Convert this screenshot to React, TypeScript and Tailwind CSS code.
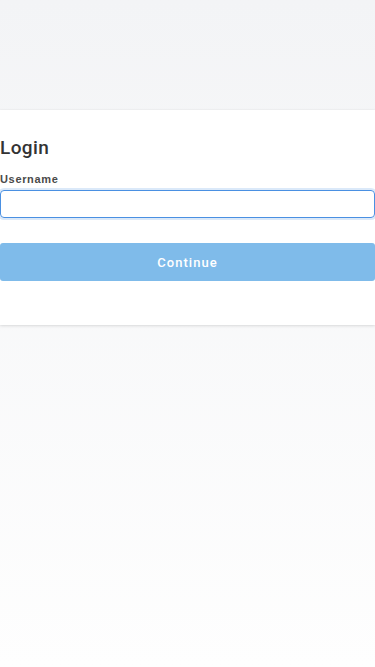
import { useState } from "react"

export default function App() {
  const [username, setUsername] = useState("")

  return (
    <div className="min-h-screen bg-gradient-to-b from-[#f3f4f6] to-[#fefefe] font-['Liberation_Sans',Arial,sans-serif]">
      <div className="h-[110px]" />
      <div className="bg-white pt-[26px] pb-[44px] shadow-[0_1px_3px_rgba(0,0,0,0.12),0_0_1px_rgba(0,0,0,0.08)]">
        <h1 className="font-['Roboto',Arial,sans-serif] text-[19px] leading-[24px] font-medium tracking-[0.02em] text-[#333]">Login</h1>
        <label htmlFor="username" className="mt-[12px] block text-[11px] leading-[14px] font-bold tracking-[0.06em] text-[#4a4a4a]">
          Username
        </label>
        <input
          id="username"
          autoFocus
          value={username}
          onChange={(e) => setUsername(e.target.value)}
          className="mt-[4px] block h-[28px] w-full rounded-[4px] border border-[#4a90e2] px-[14px] text-[13px] text-[#333] caret-[#555] outline-none ring-2 ring-[#4a90e2]/20"
        />
        <button
          type="button"
          disabled
          className="mt-[25px] flex h-[38px] w-full items-center justify-center rounded-[3px] bg-[#7fbbea] pt-[2px] font-['Roboto',Arial,sans-serif] text-[13px] font-medium tracking-[0.08em] text-white"
        >
          Continue
        </button>
      </div>
    </div>
  )
}
